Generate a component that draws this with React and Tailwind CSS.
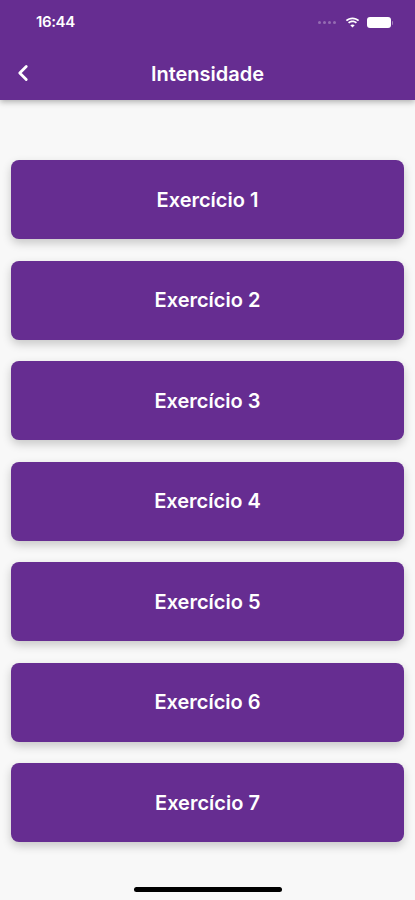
import { ChevronLeft } from "lucide-react";

const exercises = [1, 2, 3, 4, 5, 6, 7];

export default function App() {
  return (
    <div
      className="relative w-[415px] h-[900px] bg-[#f8f8f8] overflow-hidden"
      style={{ fontFamily: "Inter, 'Noto Sans', sans-serif" }}
    >
      {/* HEADER */}
      <div className="h-[100px] bg-[#662d91] shadow-[0_2px_6px_rgba(0,0,0,0.3)] relative z-10">
        {/* status bar */}
        <div className="h-[44px] flex items-center justify-between pl-[36px] pr-[22px] pt-[1px]">
          <span className="text-white text-[15px] font-semibold tracking-tight">16:44</span>
          <div className="flex items-center gap-[7px]">
            <div className="flex gap-[2px] mr-[2px]">
              <span className="w-[3px] h-[3px] rounded-full bg-white/30" />
              <span className="w-[3px] h-[3px] rounded-full bg-white/30" />
              <span className="w-[3px] h-[3px] rounded-full bg-white/30" />
              <span className="w-[3px] h-[3px] rounded-full bg-white/30" />
            </div>
            <svg width="15" height="11" viewBox="0 0 15 11">
              <path d="M7.5 2.2c2.1 0 4 .8 5.5 2.1l1.2-1.2C12.4 1.4 10 .5 7.5.5S2.6 1.4.8 3.1L2 4.3c1.5-1.3 3.4-2.1 5.5-2.1z" fill="white" />
              <path d="M7.5 5.2c1.3 0 2.4.5 3.3 1.2l1.2-1.2C10.8 4.1 9.2 3.5 7.5 3.5S4.2 4.1 3 5.2l1.2 1.2c.9-.7 2-1.2 3.3-1.2z" fill="white" />
              <path d="M7.5 10.5l2.2-2.2c-.6-.5-1.4-.8-2.2-.8s-1.6.3-2.2.8z" fill="white" />
            </svg>
            <div className="flex items-center">
              <div className="w-[24px] h-[11px] rounded-[3px] bg-white" />
              <div className="w-[1.5px] h-[4px] rounded-r bg-white/40 ml-[1px]" />
            </div>
          </div>
        </div>

        {/* nav bar */}
        <div className="h-[56px] flex items-center relative">
          <ChevronLeft className="absolute left-[10px] top-[16px] text-white" size={26} strokeWidth={2.6} />
          <h1 className="w-full text-center text-white text-[20px] font-semibold pt-[3px]">
            Intensidade
          </h1>
        </div>
      </div>

      {/* LIST */}
      <div className="flex flex-col gap-[21.5px] px-[11px] pt-[60px]">
        {exercises.map((n) => (
          <button
            key={n}
            className="h-[79px] w-full rounded-[8px] bg-[#662d91] text-white text-[20px] font-semibold shadow-[0_4px_10px_rgba(0,0,0,0.2)]"
          >
            Exercício {n}
          </button>
        ))}
      </div>

      {/* HOME INDICATOR */}
      <div className="absolute bottom-[8px] left-0 right-0 flex justify-center">
        <div className="w-[148px] h-[5px] rounded-full bg-black" />
      </div>
    </div>
  );
}
